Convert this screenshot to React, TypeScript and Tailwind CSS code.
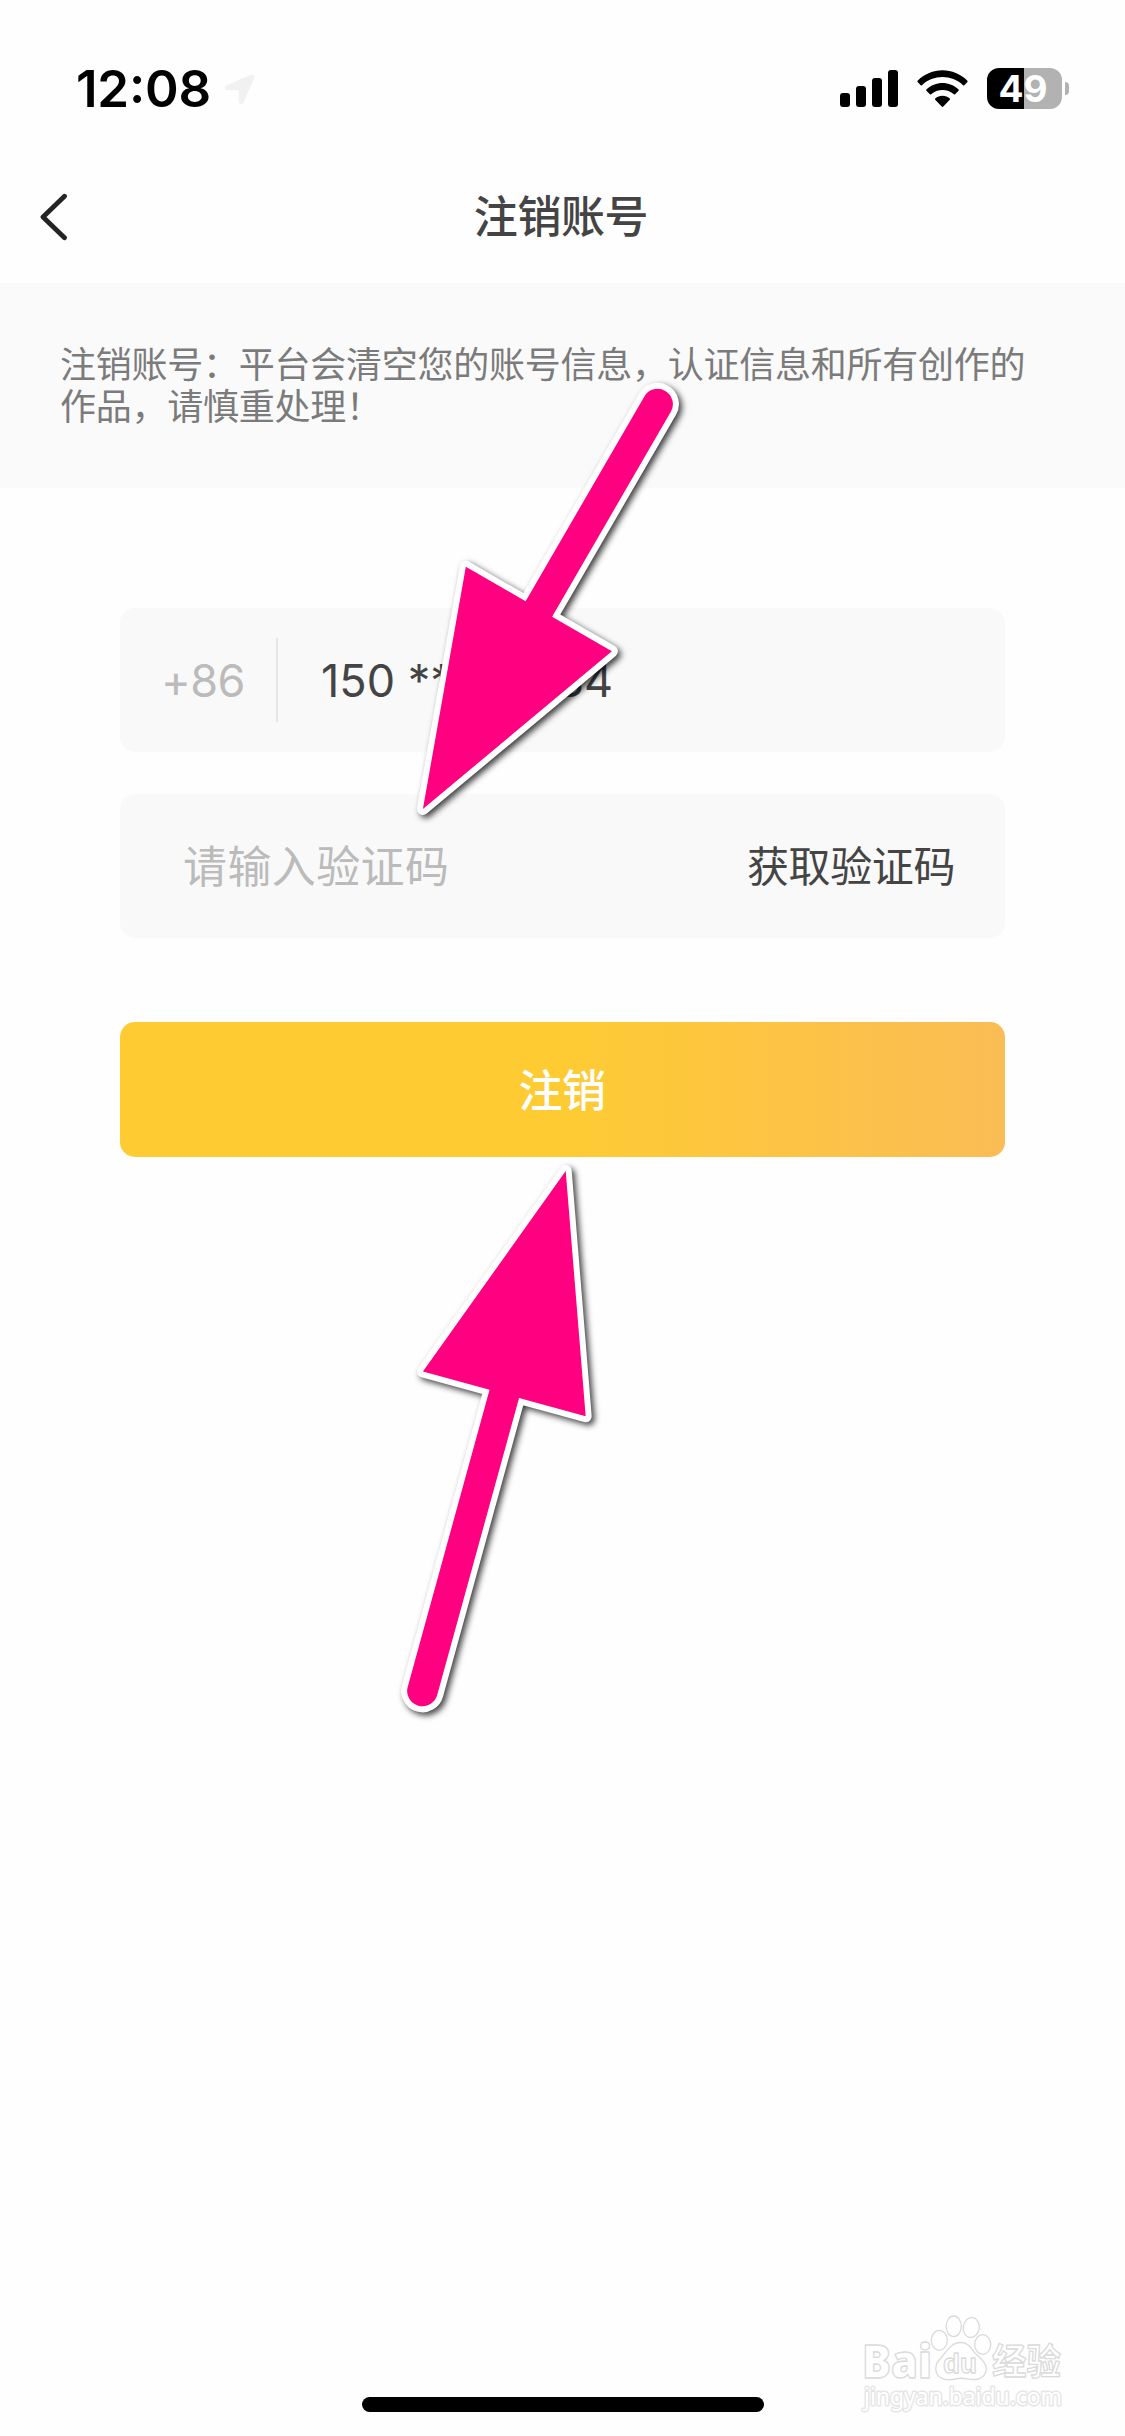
const CJK = "font-['Noto_Sans_CJK_SC',sans-serif]";
const LATIN = "font-['Inter',sans-serif]";

function StatusBar() {
  return (
    <header className={`flex h-[150px] items-start justify-between pt-[63px] pr-[56px] pl-[76px] text-black ${LATIN}`}>
      <div className="flex items-start">
        <span className="h-[52px] w-[148px] text-[51px] leading-[52px] font-semibold tracking-[-0.2px]">
          12<span className="inline-block -translate-y-[4.500px]">:</span>08
        </span>
        <svg className="mt-[11px] h-[31px] w-[31px]" viewBox="0 0 31 31" fill="#f1f1f1">
          <path d="M27.5.6C29.600-.2 31.300 1.500 30.500 3.500L19.600 28.300C18.500 30.900 14.800 30.300 14.800 27.400V17.400C14.800 16.600 14.400 16.200 13.600 16.200H3.400C.500 16.200-.300 12.600 2.400 11.500Z" />
        </svg>
      </div>
      <div className="flex items-start pt-[5px]">
        <svg className="mt-[2px] h-[37px] w-[58px]" viewBox="0 0 58 37" fill="black">
          <rect x="0" y="23" width="10" height="14" rx="3" />
          <rect x="16" y="16" width="10" height="21" rx="3" />
          <rect x="32" y="8" width="10" height="29" rx="3" />
          <rect x="48" y="0" width="10" height="37" rx="3" />
        </svg>
        <svg className="mt-[2px] ml-[19px] h-[38px] w-[51px]" viewBox="0 0 51 38" fill="black">
          <path d="M0.600 10.700C14-3.400 37-3.400 50.400 10.700Q50.900 11.300 50.400 11.900L47.300 15.200Q46.700 15.700 46.100 15.200C34.600 4.400 16.400 4.400 4.900 15.200Q4.300 15.700 3.700 15.200L.600 11.900Q.100 11.300.600 10.700Z" />
          <path d="M9.400 19.600C18.200 10.800 32.800 10.800 41.600 19.600Q42.100 20.200 41.600 20.800L38.100 24.300Q37.500 24.900 36.900 24.300C30.600 18.400 20.400 18.400 14.100 24.300Q13.500 24.900 12.900 24.300L9.400 20.800Q8.900 20.200 9.400 19.600Z" />
          <path d="M18.200 28.500C22.200 24.700 28.800 24.700 32.800 28.500Q33.400 29.200 32.800 29.800L26.300 36.600Q25.500 37.300 24.700 36.600L18.200 29.800Q17.600 29.200 18.200 28.500Z" />
        </svg>
        <div className="ml-[19px] flex h-[41px] w-[75px] items-center justify-center rounded-[12px] bg-[linear-gradient(90deg,#000_37px,#b2b2b2_37px)] pr-[3px] text-[37px] leading-[41px] font-bold text-white">
          49
        </div>
        <div className="mt-[14px] ml-[3px] h-[13px] w-[4px] rounded-r-full bg-[#b2b2b2]" />
      </div>
    </header>
  );
}

function NavBar() {
  return (
    <nav className="grid h-[133px] grid-cols-[120px_1fr_120px] items-center">
      <svg className="mt-[1px] ml-[39px] h-[48px] w-[30px]" viewBox="0 0 30 48" fill="none" stroke="#222425" strokeWidth="4.800" strokeLinecap="round" strokeLinejoin="round">
        <path d="M25.500 3.200 4 24 25.500 44.800" />
      </svg>
      <h1 className={`-mt-[5px] pr-[3px] text-center text-[44px] leading-[60px] font-medium tracking-[-0.400px] text-[#444] ${CJK}`}>注销账号</h1>
    </nav>
  );
}

function Arrow({ x, y, angle, length }: { x: number; y: number; angle: number; length: number }) {
  return (
    <path
      transform={`translate(${x} ${y}) rotate(${angle})`}
      d={`M0 0 231.200-84.400V-15.300H${length}a15.300 15.300 0 0 1 0 30.600H231.200V84.400Z`}
    />
  );
}

function Watermark() {
  return (
    <svg className="absolute top-[2310px] left-[855px] h-[110px] w-[220px]" viewBox="855 2310 220 110" fill="#fff" stroke="#dadada" strokeWidth="1.300">
      <g strokeLinejoin="round">
        <text x="862" y="2378" textLength="70" lengthAdjust="spacingAndGlyphs" fontFamily="Open Sans" fontWeight="800" fontSize="46">Bai</text>
        <ellipse cx="939.300" cy="2340.300" rx="8" ry="10" />
        <ellipse cx="953.700" cy="2326.300" rx="7.600" ry="10.300" />
        <ellipse cx="971.300" cy="2327.500" rx="8" ry="10" transform="rotate(8 971 2327)" />
        <ellipse cx="982.700" cy="2344.500" rx="8" ry="9.800" />
        <path d="M961 2342.500C968 2342.500 971 2348 975 2353C980 2358 986 2362 986.300 2368C986.500 2376 980 2380 973 2379.500C967 2379 963 2377.500 958 2378.500C951 2380 945 2381 939.500 2377C934 2372 935 2364 940 2359C945 2354 950 2342.500 961 2342.500Z" />
        <text x="943" y="2373" textLength="34" lengthAdjust="spacingAndGlyphs" fontFamily="Liberation Sans" fontWeight="700" fontSize="28">du</text>
        <text x="992" y="2375" textLength="69" lengthAdjust="spacingAndGlyphs" fontFamily="Noto Sans CJK SC" fontWeight="700" fontSize="36">经验</text>
        <text x="864" y="2404.500" textLength="198" lengthAdjust="spacingAndGlyphs" fontFamily="Noto Sans" fontSize="24" strokeWidth="3" stroke="#e6e6e6" paintOrder="stroke">jingyan.baidu.com</text>
      </g>
    </svg>
  );
}

export default function App() {
  return (
    <div className="relative flex h-[2436px] w-[1125px] flex-col overflow-hidden bg-[#fefefe]">
      <StatusBar />
      <NavBar />
      <section className={`h-[205px] bg-[#fafafa] pt-[58px] pl-[60px] text-[36px] leading-[42.300px] tracking-[-0.250px] text-[#7b7b7b] ${CJK}`}>
        <p>注销账号：平台会清空您的账号信息，认证信息和所有创作的</p>
        <p>作品，请慎重处理！</p>
      </section>

      <main className="mx-[120px] mt-[120px] flex flex-col">
        <div className={`flex h-[144px] items-center rounded-[15px] bg-[#f9f9f9] pl-[41px] text-[45px] leading-[60px] ${LATIN}`}>
          <span className="w-[115px] pt-[2px] tracking-[-0.600px] text-[#bbb]">+86</span>
          <span className="h-[84px] w-[2px] bg-[#e5e5e5]" />
          <span className="ml-[43px] flex w-[292px] justify-between pt-[2px] text-[#444]">
            <span className="whitespace-pre">150 ****</span>
            <span>**34</span>
          </span>
        </div>

        <div className={`mt-[42px] flex h-[144px] items-center justify-between rounded-[15px] bg-[#f9f9f9] pr-[50px] pb-[4px] pl-[63px] ${CJK}`}>
          <span className="text-[44px] leading-[60px] tracking-[0.400px] text-[#bbb]">请输入验证码</span>
          <button className="text-[42px] leading-[60px] tracking-[-0.400px] text-[#444]">获取验证码</button>
        </div>

        <button className={`mt-[84px] h-[135px] rounded-[15px] bg-[linear-gradient(90deg,#fecb33_50%,#fabc55)] pr-[1px] pb-[4px] text-[44px] leading-[60px] font-medium tracking-[-0.500px] text-white ${CJK}`}>
          注销
        </button>
      </main>

      <div className="mx-auto mt-auto mb-[24px] h-[15px] w-[402px] rounded-full bg-black" />

      <svg
        className="pointer-events-none absolute inset-0 h-[2436px] w-[1125px] drop-shadow-[3px_3px_3px_rgba(0,0,0,0.75)]"
        viewBox="0 0 1125 2436"
        fill="#ff0080"
        stroke="#fff"
        strokeWidth="12"
        strokeLinejoin="round"
        paintOrder="stroke"
      >
        <Arrow x={422.900} y={809} angle={-59.900} length={468} />
        <Arrow x={565.700} y={1171} angle={105.400} length={539.400} />
      </svg>
      <Watermark />
    </div>
  );
}
